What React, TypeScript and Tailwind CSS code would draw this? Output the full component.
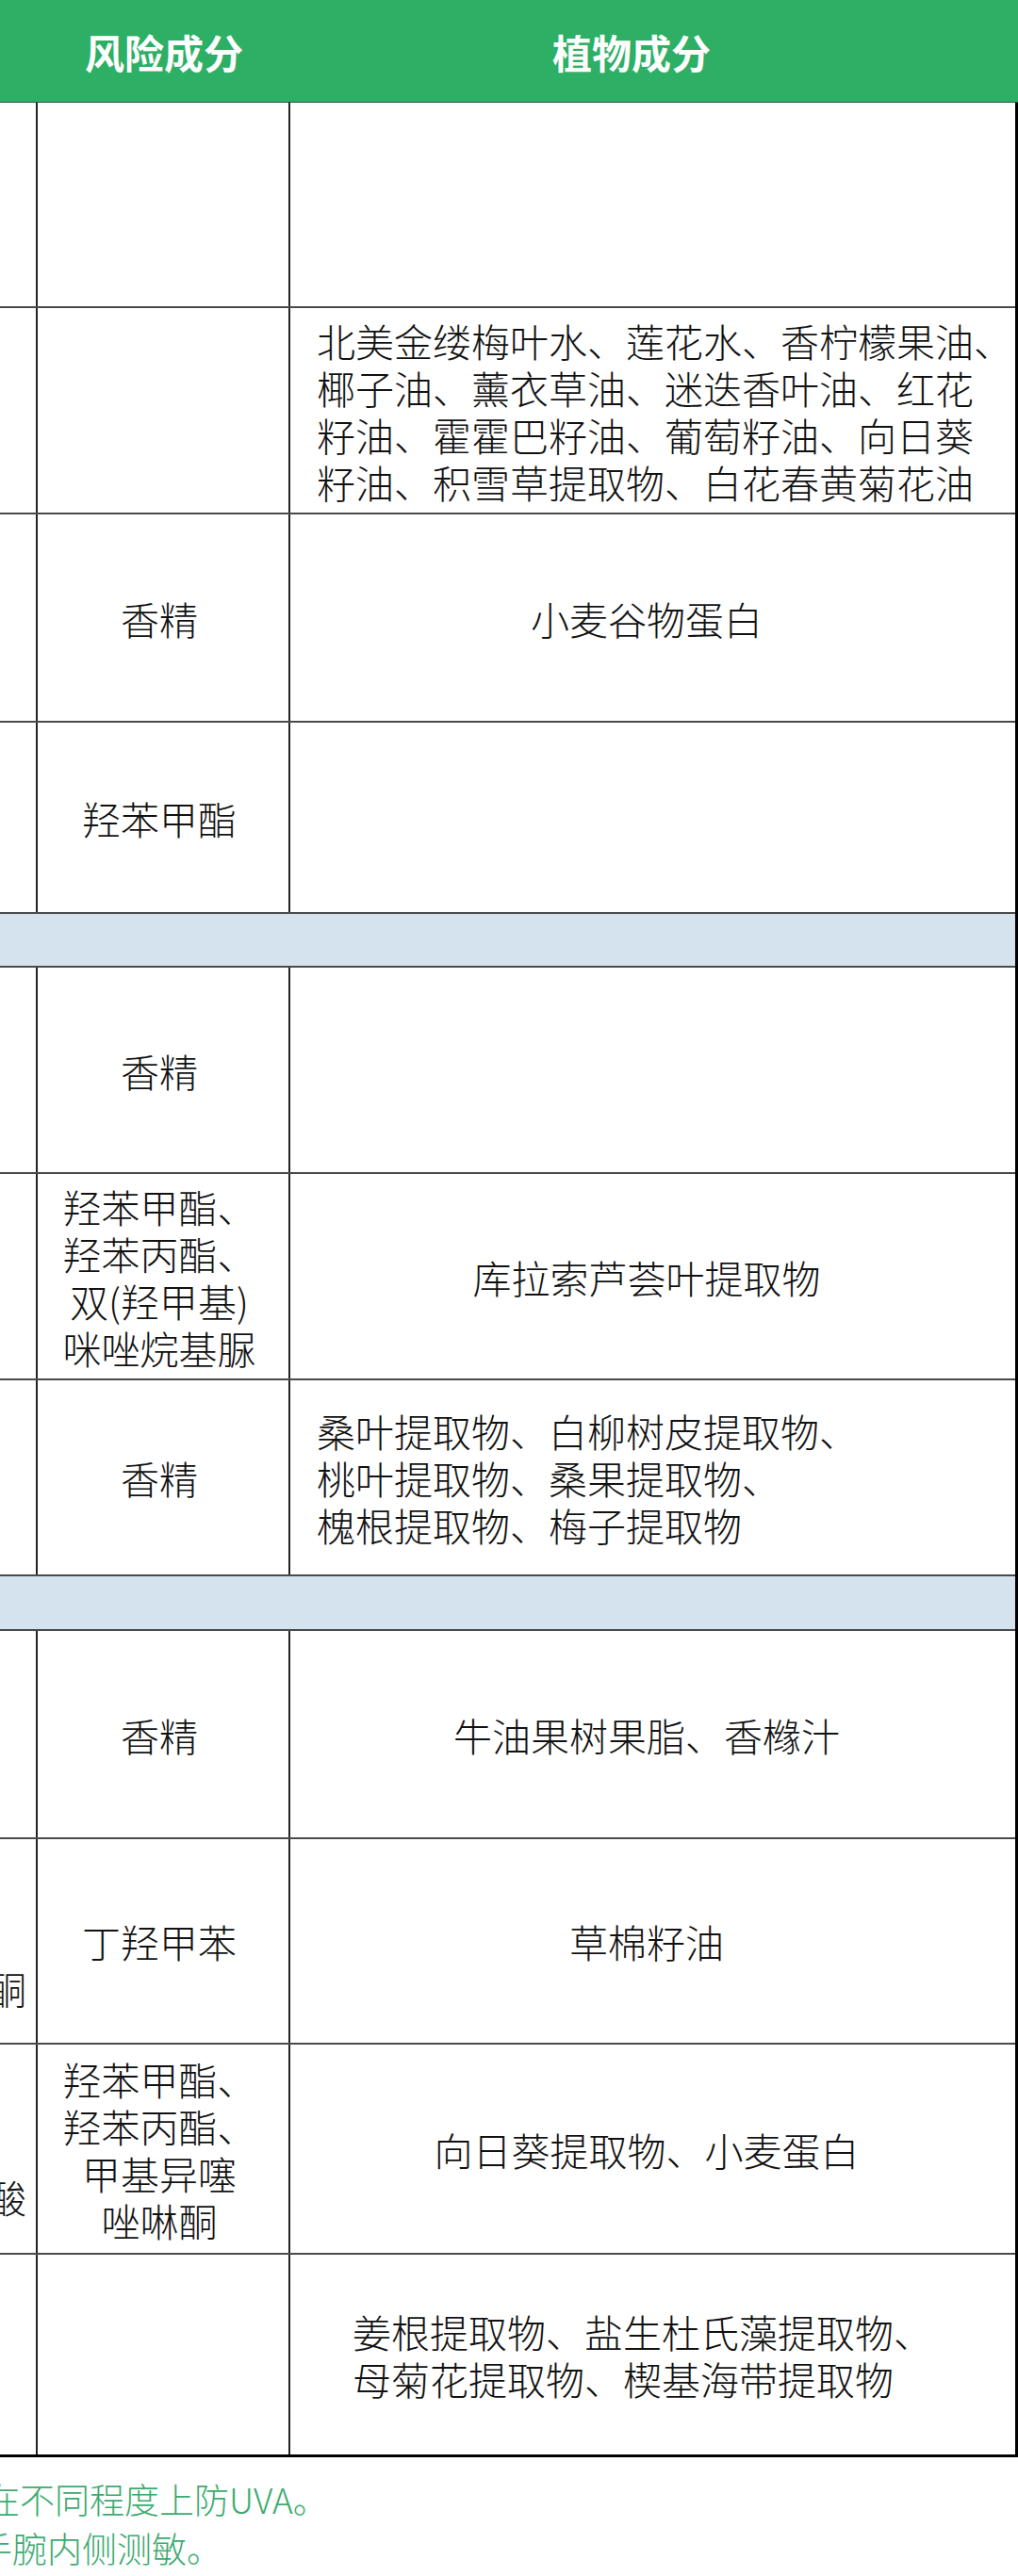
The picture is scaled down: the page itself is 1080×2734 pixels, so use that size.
type Row = {
  h: string;
  section?: boolean;
  last?: boolean;
  tail?: string[];
  risk?: string[];
  plant?: string[];
  plantClass?: string;
};

// the first column is cut off by the screenshot: only the ends of its longest lines show
const rows: Row[] = [
  { h: "h-[218px]" },
  {
    h: "h-[219px]",
    plant: [
      "北美金缕梅叶水、莲花水、香柠檬果油、",
      "椰子油、薰衣草油、迷迭香叶油、红花",
      "籽油、霍霍巴籽油、葡萄籽油、向日葵",
      "籽油、积雪草提取物、白花春黄菊花油",
    ],
    plantClass: "justify-start pl-[28px]",
  },
  { h: "h-[221px]", risk: ["香精"], plant: ["小麦谷物蛋白"] },
  { h: "h-[203px]", risk: ["羟苯甲酯"] },
  { h: "h-[57px]", section: true },
  { h: "h-[219px]", risk: ["香精"] },
  {
    h: "h-[219px]",
    risk: ["羟苯甲酯、", "羟苯丙酯、", "双(羟甲基)", "咪唑烷基脲"],
    plant: ["库拉索芦荟叶提取物"],
  },
  {
    h: "h-[208px]",
    risk: ["香精"],
    plant: ["桑叶提取物、白柳树皮提取物、", "桃叶提取物、桑果提取物、", "槐根提取物、梅子提取物"],
    plantClass: "justify-start pl-[28px]",
  },
  { h: "h-[58px]", section: true },
  { h: "h-[221px]", risk: ["香精"], plant: ["牛油果树果脂、香橼汁"] },
  { h: "h-[218px]", tail: ["", "", "酮"], risk: ["丁羟甲苯"], plant: ["草棉籽油"] },
  {
    h: "h-[223px]",
    tail: ["", "", "酸"],
    risk: ["羟苯甲酯、", "羟苯丙酯、", "甲基异噻", "唑啉酮"],
    plant: ["向日葵提取物、小麦蛋白"],
  },
  {
    h: "h-[212px]",
    last: true,
    plant: ["姜根提取物、盐生杜氏藻提取物、", "母菊花提取物、楔基海带提取物"],
    plantClass: "justify-start pl-[66px]",
  },
];

function Lines({ lines, align }: { lines: string[]; align: string }) {
  return (
    <div className={`flex flex-col ${align}`}>
      {lines.map((line, i) => (
        <div key={i} className="h-[50px] whitespace-nowrap leading-[50px]">
          {line}
        </div>
      ))}
    </div>
  );
}

function TableRow({ row }: { row: Row }) {
  const border = row.last ? "" : "border-b-2 border-[#4a4a4a]";

  if (row.section) {
    return <div className={`${row.h} ${border} bg-[#d5e3ee]`} />;
  }

  return (
    <div className={`flex ${row.h} ${border}`}>
      <div className="flex w-[40px] shrink-0 flex-col items-end justify-center overflow-hidden border-r-2 border-[#222] pr-[10px]">
        {row.tail && <Lines lines={row.tail} align="items-end" />}
      </div>
      <div className="flex w-[268px] shrink-0 items-center justify-center border-r-2 border-[#222] pr-[8px] text-center">
        {row.risk && <Lines lines={row.risk} align="items-center" />}
      </div>
      <div
        className={`flex min-w-0 flex-1 items-center ${row.plantClass ?? "justify-center pr-[13px]"}`}
      >
        {row.plant && <Lines lines={row.plant} align="items-start" />}
      </div>
    </div>
  );
}

export default function App() {
  return (
    <div className="h-[2734px] w-[1080px] overflow-hidden bg-white font-['Noto_Sans_CJK_SC_Light','Noto_Sans_CJK_SC',sans-serif] text-[41px] font-light text-[#111]">
      <div className="flex h-[109px] border-b border-[#36503f] bg-[#2daf66] text-[42px] text-white">
        <div className="w-[40px] shrink-0" />
        <div className="flex w-[268px] shrink-0 items-center justify-center font-['Noto_Sans_CJK_SC',sans-serif] font-bold">
          风险成分
        </div>
        <div className="flex flex-1 items-center justify-center pr-[48px] font-['Noto_Sans_CJK_SC',sans-serif] font-bold">
          植物成分
        </div>
      </div>

      <div className="w-[1080px] border-b-[3px] border-r-[3px] border-black">
        {rows.map((row, i) => (
          <TableRow key={i} row={row} />
        ))}
      </div>

      <div className="pt-[18px] text-[37px] leading-[52px] text-[#3dab6f]">
        <div className="ml-[-16px] whitespace-nowrap">在不同程度上防UVA。</div>
        <div className="ml-[-24px] whitespace-nowrap">手腕内侧测敏。</div>
      </div>
    </div>
  );
}
